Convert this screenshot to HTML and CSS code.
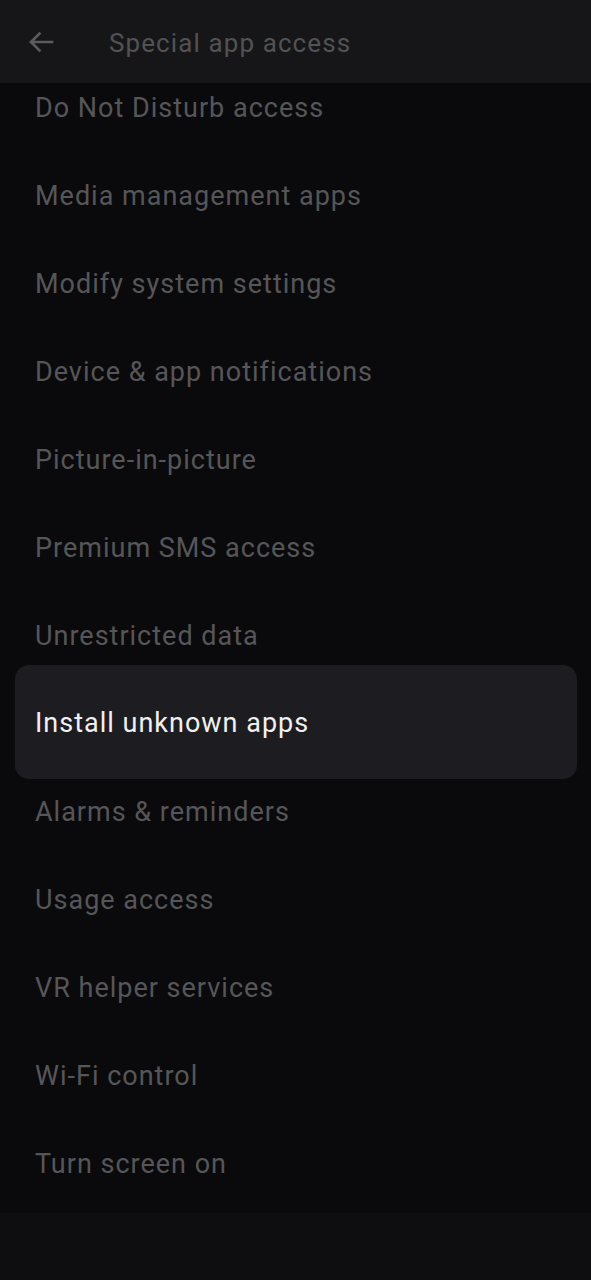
FILE: index.html
```html
<!DOCTYPE html>
<html lang="en">
<head>
<meta charset="utf-8">
<title>Special app access</title>
<link rel="stylesheet" href="styles.css">
</head>
<body>
<div class="screen">
  <header class="topbar">
    <button class="back" aria-label="Back">
      <svg width="26" height="22" viewBox="0 0 26 22" aria-hidden="true">
        <path d="M24 11H3M11.5 2.5L3 11l8.5 8.5" fill="none" stroke="#5c5c5e" stroke-width="2.6" stroke-linecap="square" stroke-linejoin="miter"/>
      </svg>
    </button>
    <h1 class="title">Special app access</h1>
  </header>
  <main class="viewport">
    <ul class="list">
      <li class="item">Do Not Disturb access</li>
      <li class="item">Media management apps</li>
      <li class="item">Modify system settings</li>
      <li class="item">Device &amp; app notifications</li>
      <li class="item">Picture-in-picture</li>
      <li class="item">Premium SMS access</li>
      <li class="item">Unrestricted data</li>
      <li class="item item-active">Install unknown apps</li>
      <li class="item">Alarms &amp; reminders</li>
      <li class="item">Usage access</li>
      <li class="item">VR helper services</li>
      <li class="item">Wi-Fi control</li>
      <li class="item">Turn screen on</li>
    </ul>
  </main>
  <footer class="navbar"></footer>
</div>
</body>
</html>
```

FILE: styles.css
```css
* { box-sizing: border-box; }
html, body {
  margin: 0;
  padding: 0;
  background: #0a0a0c;
}
.screen {
  width: 591px;
  height: 1280px;
  display: flex;
  flex-direction: column;
  background: #0a0a0c;
  font-family: Roboto, "Open Sans", "Liberation Sans", sans-serif;
  overflow: hidden;
}
.topbar {
  height: 83px;
  flex: none;
  background: #161618;
  display: flex;
  align-items: center;
  padding-left: 27px;
}
.back {
  width: 28px;
  height: 24px;
  padding: 0;
  margin: 0;
  border: 0;
  background: none;
  display: flex;
  align-items: center;
  justify-content: center;
}
.title {
  margin: 0 0 0 54px;
  padding-top: 2px;
  font-size: 26px;
  font-weight: 400;
  letter-spacing: 1.1px;
  color: #525255;
}
.viewport {
  height: 1130px;
  flex: none;
  overflow: hidden;
}
.list {
  list-style: none;
  margin: -21px 0 0;
  padding: 0;
}
.item {
  height: 88px;
  display: flex;
  align-items: center;
  padding-left: 35px;
  padding-top: 3px;
  font-size: 27px;
  letter-spacing: 1px;
  color: #565659;
}
.item-active {
  height: 114px;
  margin: -13px 14px -13px 15px;
  padding-left: 20px;
  padding-top: 2px;
  background: #1d1d21;
  border-radius: 14px;
  color: #f0f0f2;
}
.navbar {
  flex: 1;
  background: #0e0e10;
}
```
